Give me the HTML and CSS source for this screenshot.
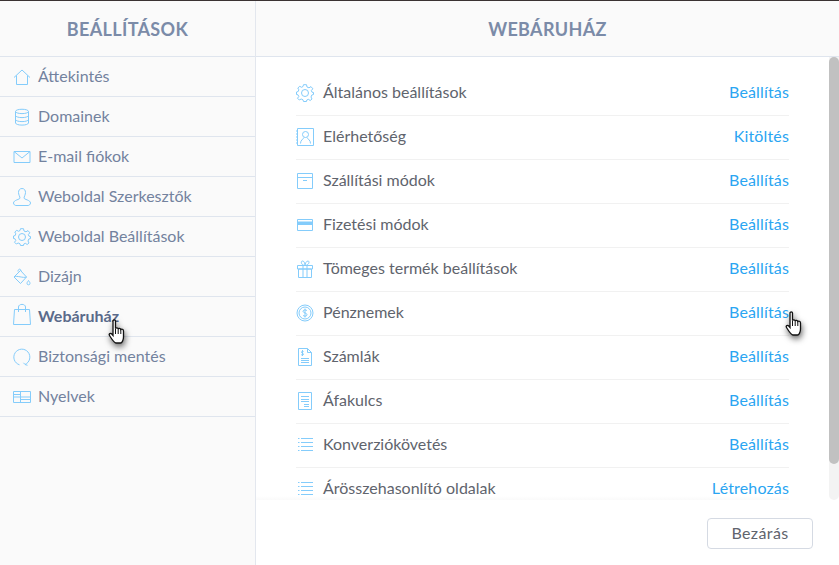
FILE: index.html
```html
<!DOCTYPE html>
<html lang="hu">

<head>
    <meta charset="UTF-8">
    <link rel="stylesheet" href="styles.css">
    <title>Webáruház</title>
</head>

<body>
    <div class="topline"></div>
    <div class="app">
        <div class="side">
            <div class="side-title">BEÁLLÍTÁSOK</div>
            <div class="menu-item">
                <svg class="icon" viewBox="0 0 18 18"><path d="M1 9.5 9 2 17 9.500M3.500 7.500V16.500H14.500V7.500"/></svg>
                <span>Áttekintés</span>
            </div>
            <div class="menu-item">
                <svg class="icon" viewBox="0 0 18 18"><path d="M2.500 3.500C2.500 .5 15.500 .5 15.500 3.500V15C15 17.800 3 17.800 2.500 15ZM2.500 3.500C3 6.300 15 6.300 15.500 3.500M2.500 7.500C3 10.300 15 10.300 15.500 7.500M2.500 11.500C3 14.300 15 14.300 15.500 11.500"/></svg>
                <span>Domainek</span>
            </div>
            <div class="menu-item">
                <svg class="icon" viewBox="0 0 18 18"><path d="M1 3.500H17V14.500H1ZM1 3.500 9 10 17 3.500"/></svg>
                <span>E-mail fiókok</span>
            </div>
            <div class="menu-item">
                <svg class="icon" viewBox="0 0 18 18"><path d="M9 .5C6.500 .5 5.500 2.500 5.500 4.500S7 9 7 10C7 11.500 .5 12 .5 15 .5 16.500 2 17.500 3 17.500H15C16 17.500 17.500 16.500 17.500 15 17.500 12 11 11.500 11 10 11 9 12.500 6.500 12.500 4.500S11.500 .5 9 .5Z"/></svg>
                <span>Weboldal Szerkesztők</span>
            </div>
            <div class="menu-item">
                <svg class="icon" viewBox="0 0 18 18"><circle cx="9" cy="9" r="3.500"/><path d="M7.500.7H10.500L11 3 13 3.800 15 2.600 16.800 4.800 15.300 6.600 16 8.200 17.500 8.500V10.500L15.800 11 15 13 16 15 14.200 16.500 12.300 15.300 10.800 16 10.500 17.500H7.500L7 15.800 5.200 15 3.300 16 1.500 14.200 2.800 12.500 2 10.800.5 10.500V8L2.200 7.500 2.800 5.800 1.800 4 3.800 2.300 5.500 3.300 7 2.500Z"/></svg>
                <span>Weboldal Beállítások</span>
            </div>
            <div class="menu-item">
                <svg class="icon" viewBox="0 0 18 18"><path d="M5 3.500C5 .5 8 .5 8 3M7.500 2.500 13.500 9 7.500 15.500 1 9ZM1 9C4 7 10 10.500 13.500 9M15.500 12.500C14.500 14 14 14.500 14 15.300A1.500 1.500 0 0 0 17 15.300C17 14.500 16.500 14 15.500 12.500Z"/></svg>
                <span>Dizájn</span>
            </div>
            <div class="menu-item active">
                <svg class="icon icon-bag" viewBox="0 0 18 22"><path d="M1.500 6.500H16.500L17.500 21.500H.5ZM5.500 9V4C5.500 .5 12.500 .5 12.500 4V9"/></svg>
                <span>Webáruház</span>
            </div>
            <div class="menu-item">
                <svg class="icon" viewBox="0 0 18 18"><path d="M6.500 16.800A8 8 0 1 1 12 16.500M12 16.500 10.500 14.800M12 16.500 14.500 17.300"/></svg>
                <span>Biztonsági mentés</span>
            </div>
            <div class="menu-item">
                <svg class="icon" viewBox="0 0 18 18"><path d="M.5 3.500H17.500V14.500H.5ZM.5 9H17.500M7.500 3.500V14.500M.5 6.500H7.500M7.500 11.500H17.500"/></svg>
                <span>Nyelvek</span>
            </div>
        </div>

        <div class="main">
            <div class="main-title">WEBÁRUHÁZ</div>
            <div class="scroll-area">
                <div class="list">
                    <div class="row">
                        <svg class="icon" viewBox="0 0 18 18"><circle cx="9" cy="9" r="3.500"/><path d="M7.500.7H10.500L11 3 13 3.800 15 2.600 16.800 4.800 15.300 6.600 16 8.200 17.500 8.500V10.500L15.800 11 15 13 16 15 14.200 16.500 12.300 15.300 10.800 16 10.500 17.500H7.500L7 15.800 5.200 15 3.300 16 1.500 14.200 2.800 12.500 2 10.800.5 10.500V8L2.200 7.500 2.800 5.800 1.800 4 3.800 2.300 5.500 3.300 7 2.500Z"/></svg>
                        <span class="row-name">Általános beállítások</span>
                        <a class="row-link">Beállítás</a>
                    </div>
                    <div class="row">
                        <svg class="icon" viewBox="0 0 18 18"><path d="M1.500.5H17.500V17.500H1.500ZM0 3H1.500M0 6H1.500M0 9H1.500M0 12H1.500M0 15H1.500"/><circle cx="9.500" cy="6.500" r="3"/><path d="M4.500 15.500C4.500 12 7 11.500 8 9.500M14.500 15.500C14.500 12 12 11.500 11 9.500"/></svg>
                        <span class="row-name">Elérhetőség</span>
                        <a class="row-link">Kitöltés</a>
                    </div>
                    <div class="row">
                        <svg class="icon" viewBox="0 0 18 18"><path d="M1.500 1.500H16.500V16.500H1.500ZM1.500 5.500H16.500M7 8.500H11"/></svg>
                        <span class="row-name">Szállítási módok</span>
                        <a class="row-link">Beállítás</a>
                    </div>
                    <div class="row">
                        <svg class="icon" viewBox="0 0 18 18"><path d="M1.500 3.500H16.500V14.500H1.500Z"/><path class="fill" d="M1.500 5.500H16.500V9H1.500Z"/></svg>
                        <span class="row-name">Fizetési módok</span>
                        <a class="row-link">Beállítás</a>
                    </div>
                    <div class="row">
                        <svg class="icon" viewBox="0 0 18 18"><path d="M1.500 5.500H16.500V9H1.500ZM2.500 9H15.500V17.500H2.500ZM7 5.500V17.500M11 5.500V17.500M9 5.500C5 5.500 4.500 1 6.500 1S9 4 9 5.500C9 4 10 1 12 1S13 5.500 9 5.500Z"/></svg>
                        <span class="row-name">Tömeges termék beállítások</span>
                        <a class="row-link">Beállítás</a>
                    </div>
                    <div class="row">
                        <svg class="icon" viewBox="0 0 18 18"><circle cx="9" cy="9" r="8"/><circle cx="9" cy="9" r="6"/><path d="M11 6.800C10.500 5.500 7 5.500 7 7.300S11 8.700 11 10.700 7.500 12.500 7 11.200M9 4.500V13.500"/></svg>
                        <span class="row-name">Pénznemek</span>
                        <a class="row-link">Beállítás</a>
                    </div>
                    <div class="row">
                        <svg class="icon" viewBox="0 0 18 18"><path d="M2.500.5H11.500L15.500 4.500V17.500H2.500ZM11.500.5V4.500H15.500M5 10.500H13M5 12.500H13M5 14.500H13M7.500 3.500C6.500 3 5 3.500 5.500 4.500S8 5.500 7.500 6.500 5.500 7 5 6.500M6.500 2V8"/></svg>
                        <span class="row-name">Számlák</span>
                        <a class="row-link">Beállítás</a>
                    </div>
                    <div class="row">
                        <svg class="icon" viewBox="0 0 18 18"><path d="M2.500.5H15.500V17.500H2.500ZM5 4.500H13M5 7.500H13M5 9.500H13M8 12.500H13M8 14.500H13"/></svg>
                        <span class="row-name">Áfakulcs</span>
                        <a class="row-link">Beállítás</a>
                    </div>
                    <div class="row">
                        <svg class="icon" viewBox="0 0 18 18"><path d="M5 2.500H17M5 6.500H17M5 10.500H17M5 14.500H17M2 2.500H3.500M2 6.500H3.500M2 10.500H3.500M2 14.500H3.500"/></svg>
                        <span class="row-name">Konverziókövetés</span>
                        <a class="row-link">Beállítás</a>
                    </div>
                    <div class="row">
                        <svg class="icon" viewBox="0 0 18 18"><path d="M5 2.500H17M5 6.500H17M5 10.500H17M5 14.500H17M2 2.500H3.500M2 6.500H3.500M2 10.500H3.500M2 14.500H3.500"/></svg>
                        <span class="row-name">Árösszehasonlító oldalak</span>
                        <a class="row-link">Létrehozás</a>
                    </div>
                    <div class="fade"></div>
                </div>
                <div class="scrollbar">
                    <div class="thumb"></div>
                </div>
            </div>
            <div class="footer">
                <button class="close-btn">Bezárás</button>
            </div>
        </div>
    </div>

    <!-- the two mouse pointers sit over the content -->
    <svg class="cursor cursor-side" viewBox="0 0 20 26"><path d="M5 2C5 .5 7.500 .5 7.500 2V9.500C8 8.500 10 8.500 10.200 10 10.500 9 12.500 9 12.800 10.500 13.500 9.800 15.500 10 15.500 12V18C15.500 21 14 24 12.500 24H8C6 24 5 22 1.500 16.500.5 15 2.500 13.500 3.800 15L5 16.500Z"/><path class="cursor-line" d="M7.500 9.500V15M10.200 10V15M12.800 10.500V15"/></svg>
    <svg class="cursor cursor-main" viewBox="0 0 20 26"><path d="M5 2C5 .5 7.500 .5 7.500 2V9.500C8 8.500 10 8.500 10.200 10 10.500 9 12.500 9 12.800 10.500 13.500 9.800 15.500 10 15.500 12V18C15.500 21 14 24 12.500 24H8C6 24 5 22 1.500 16.500.5 15 2.500 13.500 3.800 15L5 16.500Z"/><path class="cursor-line" d="M7.500 9.500V15M10.200 10V15M12.800 10.500V15"/></svg>
</body>

</html>
```

FILE: styles.css
```css
* {
    margin: 0;
    padding: 0;
    box-sizing: border-box;
}

html,
body {
    width: 839px;
    height: 565px;
    overflow: hidden;
}

body {
    background-color: #fff;
    font-family: "Lato", "Noto Sans", sans-serif;
    font-size: 16px;
    position: relative;
}

.topline {
    height: 1px;
    background-color: #3a3232;
}

.app {
    display: flex;
    height: 564px;
}

/* left menu */
.side {
    width: 256px;
    flex-shrink: 0;
    background-color: #fafafa;
    border-right: 1px solid #e3e7ee;
}

.side-title {
    height: 56px;
    line-height: 56px;
    text-align: center;
    font-size: 18px;
    font-weight: 700;
    letter-spacing: .35px;
    color: #7b8ba8;
    border-bottom: 1px solid #dfe5ee;
}

.menu-item {
    height: 40px;
    display: flex;
    align-items: center;
    padding: 0 0 2px 13px;
    gap: 7px;
    color: #73829e;
    border-bottom: 1px solid #dfe5ee;
}

.menu-item.active {
    font-weight: 700;
    color: #5a6a8a;
}

.icon {
    width: 18px;
    height: 18px;
    flex-shrink: 0;
    fill: none;
    stroke: #84ccfb;
    stroke-width: 1;
}

.menu-item .icon {
    margin-top: 3px;
}

.menu-item .icon-bag {
    height: 22px;
    margin: 0 0 3px;
}

.row .icon {
    margin-top: 3px;
}

.icon .fill {
    fill: #84ccfb;
    stroke: none;
}

/* right panel */
.main {
    flex: 1;
    display: flex;
    flex-direction: column;
    min-width: 0;
}

.main-title {
    height: 56px;
    line-height: 56px;
    text-align: center;
    font-size: 18px;
    font-weight: 700;
    letter-spacing: .35px;
    color: #7b8ba8;
    background-color: #fafafa;
    border-bottom: 1px solid #dfe5ee;
}

.scroll-area {
    height: 443px;
    display: flex;
}

.list {
    flex: 1;
    padding: 15px 40px 0;
    overflow: hidden;
    position: relative;
}

.row {
    height: 44px;
    display: flex;
    align-items: center;
    gap: 9px;
    padding-bottom: 4px;
    color: #5f646d;
    border-bottom: 1px solid #f1f1f1;
}

.row-name {
    flex: 1;
}

.row-link {
    color: #2aa5f2;
    letter-spacing: .15px;
}

.fade {
    position: absolute;
    left: 0;
    right: 40px;
    bottom: 0;
    height: 4px;
    background: linear-gradient(rgba(255, 255, 255, 0), #fafafa);
}

.scrollbar {
    width: 10px;
    background-color: #f3f3f3;
    border-radius: 0 0 5px 5px;
}

.thumb {
    height: 407px;
    background-color: #c1c1c1;
    border-radius: 5px;
}

.footer {
    flex: 1;
    display: flex;
    justify-content: flex-end;
    padding: 18px 26px 0 0;
}

.close-btn {
    width: 106px;
    height: 31px;
    padding-bottom: 3px;
    background-color: #fff;
    border: 1px solid #d5dae3;
    border-radius: 4px;
    font-family: inherit;
    font-size: 16px;
    letter-spacing: .4px;
    color: #5f646d;
}

/* mouse pointers */
.cursor {
    position: absolute;
    width: 20px;
    height: 26px;
    fill: #fff;
    stroke: #111;
    stroke-width: 1.300;
    filter: drop-shadow(1px 3px 3px rgba(0, 0, 0, .6));
}

.cursor-line {
    fill: none;
    stroke-width: 1;
}

.cursor-side {
    left: 108px;
    top: 319px;
}

.cursor-main {
    left: 785px;
    top: 311px;
}
```
